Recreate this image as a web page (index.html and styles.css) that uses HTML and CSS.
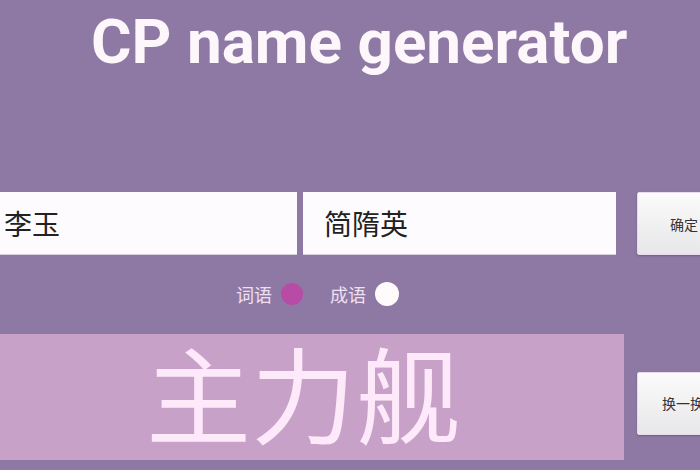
FILE: index.html
```html
<!DOCTYPE html>
<html lang="zh">
<head>
<meta charset="utf-8">
<title>CP name generator</title>
<link rel="stylesheet" href="styles.css">
</head>
<body>
<div class="page">
  <h1 class="title">CP name generator</h1>
  <div class="input-row">
    <div class="field field-a">李玉</div>
    <div class="field field-b">简隋英</div>
    <button class="btn">确定</button>
  </div>
  <div class="radio-row">
    <span class="radio"><span class="radio-label">词语</span><span class="dot dot-on"></span></span>
    <span class="radio"><span class="radio-label">成语</span><span class="dot dot-off"></span></span>
  </div>
  <div class="result-row">
    <div class="result"><span class="result-text">主力舰</span></div>
    <button class="btn btn-swap">换一换</button>
  </div>
</div>
</body>
</html>
```
FILE: styles.css
```css
html, body {
  margin: 0;
  padding: 0;
  width: 700px;
  height: 470px;
  overflow: hidden;
  background: #8e79a4;
}
.page {
  display: flex;
  flex-direction: column;
  width: 760px;
  font-family: Roboto, "Noto Sans CJK SC", sans-serif;
}
.title {
  margin: 0;
  padding: 6px 0 0 91px;
  height: 186px;
  box-sizing: border-box;
  font-family: Roboto, sans-serif;
  font-weight: 700;
  font-size: 62px;
  line-height: 72px;
  color: #fdf6fb;
  white-space: nowrap;
}
.input-row {
  display: flex;
  align-items: stretch;
  height: 63px;
  margin-top: 6px;
}
.field {
  background: #fdfbfd;
  box-sizing: border-box;
  font-family: "Noto Sans CJK SC", sans-serif;
  font-size: 28px;
  color: #222;
  display: flex;
  align-items: center;
  border-bottom: 1px solid #d9cde0;
}
.field-a {
  width: 297px;
  padding-left: 4px;
}
.field-b {
  width: 313px;
  margin-left: 6px;
  padding-left: 21px;
}
.btn {
  width: 100px;
  height: 63px;
  margin-left: 21px;
  border: 1px solid #e6dceb;
  border-radius: 2px;
  background: linear-gradient(#fbfbfb, #e7e7e9);
  box-shadow: 0 1px 2px rgba(60, 40, 80, 0.35);
  font-family: "Noto Sans CJK SC", sans-serif;
  font-size: 14px;
  color: #333;
  text-align: left;
  padding: 0 0 0 32px;
  white-space: nowrap;
}
.btn-swap {
  padding-left: 24px;
}
.radio-row {
  display: flex;
  gap: 27px;
  padding-left: 236px;
  margin-top: 27px;
  height: 24px;
  align-items: center;
}
.radio {
  display: flex;
  align-items: center;
  gap: 9px;
}
.radio-label {
  font-family: "Noto Sans CJK SC", sans-serif;
  font-size: 18px;
  color: #eee0f2;
  line-height: 24px;
}
.dot {
  display: block;
  width: 22px;
  height: 22px;
  border-radius: 50%;
}
.dot-on {
  background: #b84ba5;
}
.dot-off {
  width: 24px;
  height: 24px;
  background: #fffbfb;
}
.result-row {
  display: flex;
  align-items: center;
  margin-top: 28px;
}
.result {
  width: 624px;
  height: 126px;
  background: #c8a1c9;
  box-sizing: border-box;
  padding: 4px 0 0 146px;
}
.result-text {
  display: block;
  font-family: "Noto Sans CJK SC", sans-serif;
  font-size: 105px;
  line-height: 112px;
  margin-top: -4px;
  color: #fde9fa;
  white-space: nowrap;
}
.result-row .btn {
  margin-left: 13px;
  margin-top: 12px;
}
```
